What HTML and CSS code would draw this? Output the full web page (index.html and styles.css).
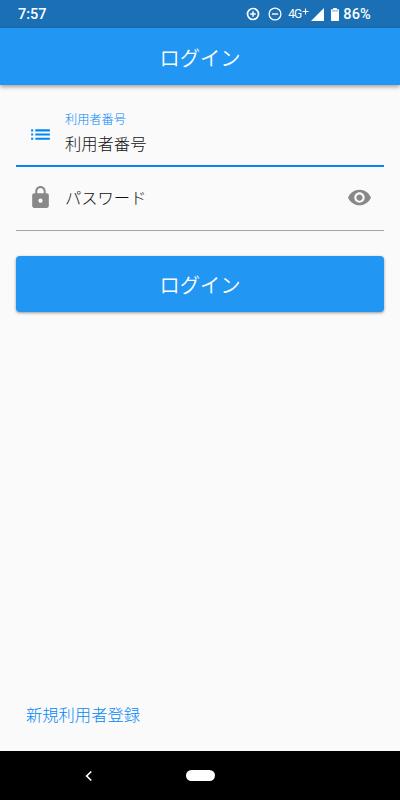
FILE: index.html
```html
<!DOCTYPE html>
<html lang="ja">
<head>
    <meta charset="UTF-8">
    <meta name="viewport" content="width=device-width, initial-scale=1.0">
    <title>ログイン</title>
    <link rel="stylesheet" href="styles.css">
</head>
<body>
    <div class="screen">
        <div class="status-bar">
            <span class="clock">7:57</span>
            <div class="status-icons">
                <svg class="data-saver" width="14" height="14" viewBox="0 0 14 14" fill="none" stroke="#fff">
                    <circle cx="7" cy="7" r="5.5" stroke-width="1.7"/>
                    <path d="M7 4.200v5.600M4.200 7h5.600" stroke-width="1.5"/>
                </svg>
                <svg class="dnd" width="14" height="14" viewBox="0 0 14 14" fill="none" stroke="#fff">
                    <circle cx="7" cy="7" r="5.9" stroke-width="1.3"/>
                    <path d="M3.900 7h6.200" stroke-width="1.4"/>
                </svg>
                <span class="network">4G</span>
                <svg class="plus" width="7" height="7" viewBox="0 0 7 7">
                    <path d="M3.500 .5v6M.5 3.500h6" stroke="#fff" stroke-width="1.100"/>
                </svg>
                <svg class="signal" width="13" height="13" viewBox="0 0 13 13">
                    <path d="M13 0v13H0z" fill="#fff"/>
                </svg>
                <svg class="battery" width="8" height="13" viewBox="0 0 8 13">
                    <path d="M2.200 0h3.600v1.300H7.300Q8 1.300 8 2v10.300q0 .7-.7.7H.7Q0 13 0 12.300V2Q0 1.300.7 1.300h1.500z" fill="#fff"/>
                    <path d="M1 2.900h6" stroke="#1a6fb5" stroke-opacity=".6"/>
                </svg>
                <span class="percent">86%</span>
            </div>
        </div>

        <header class="app-bar">
            <h1>ログイン</h1>
        </header>

        <main class="content">
            <div class="field field-active">
                <svg class="field-icon" width="25" height="25" viewBox="0 0 24 24" fill="currentColor">
                    <path d="M3 13h2v-2H3v2zm0 4h2v-2H3v2zm0-8h2V7H3v2zm4 4h14v-2H7v2zm0 4h14v-2H7v2zM7 7v2h14V7H7z"/>
                </svg>
                <div class="field-text">
                    <span class="field-label">利用者番号</span>
                    <span class="field-hint">利用者番号</span>
                </div>
            </div>

            <div class="field">
                <svg class="field-icon" width="25" height="25" viewBox="0 0 24 24" fill="currentColor">
                    <path d="M18 8h-1V6c0-2.760-2.240-5-5-5S7 3.240 7 6v2H6c-1.100 0-2 .9-2 2v10c0 1.100.9 2 2 2h12c1.100 0 2-.9 2-2V10c0-1.100-.9-2-2-2zm-6 9c-1.100 0-2-.9-2-2s.9-2 2-2 2 .9 2 2-.9 2-2 2zm3.100-9H8.900V6c0-1.710 1.390-3.100 3.100-3.100s3.100 1.390 3.100 3.100v2z"/>
                </svg>
                <div class="field-text">
                    <span class="field-placeholder">パスワード</span>
                </div>
                <svg class="toggle-icon" width="25" height="25" viewBox="0 0 24 24" fill="currentColor">
                    <path d="M12 4.500C7 4.500 2.730 7.610 1 12c1.730 4.390 6 7.500 11 7.500s9.270-3.110 11-7.500c-1.730-4.390-6-7.500-11-7.500zM12 17c-2.760 0-5-2.240-5-5s2.240-5 5-5 5 2.240 5 5-2.240 5-5 5zm0-8c-1.660 0-3 1.340-3 3s1.340 3 3 3 3-1.340 3-3-1.340-3-3-3z"/>
                </svg>
            </div>

            <button class="login-btn">ログイン</button>

            <a class="register-link" href="#">新規利用者登録</a>
        </main>

        <nav class="nav-bar">
            <svg class="nav-back" width="8" height="12" viewBox="0 0 8 12" fill="none" stroke="#fff" stroke-width="1.7">
                <path d="M6.300 1.500L1.700 6l4.600 4.500"/>
            </svg>
            <div class="nav-home"></div>
        </nav>
    </div>
</body>
</html>
```
FILE: styles.css
```css
* {
    margin: 0;
    padding: 0;
    box-sizing: border-box;
}

body {
    font-family: "Noto Sans CJK JP", sans-serif;
    background: #fafafa;
    color: #333;
}

.screen {
    display: flex;
    flex-direction: column;
    height: 800px;
}

.status-bar {
    display: flex;
    justify-content: space-between;
    align-items: center;
    height: 28px;
    padding: 0 29px 0 18px;
    background: #1a6fb5;
    color: white;
    font-family: Roboto, sans-serif;
    font-size: 14.5px;
    font-weight: 500;
}

.status-icons {
    display: flex;
    align-items: center;
}

.dnd {
    margin-left: 8px;
}

.network {
    width: 13px;
    margin-left: 6px;
    font-size: 12px;
    font-weight: 400;
    letter-spacing: -1px;
}

.plus {
    margin-left: 1px;
    margin-bottom: 5px;
}

.signal {
    margin-left: 2px;
}

.battery {
    margin-left: 7px;
}

.percent {
    margin-left: 4px;
    letter-spacing: 0.2px;
}

.app-bar {
    display: flex;
    align-items: center;
    justify-content: center;
    height: 57px;
    background: #2196f3;
    box-shadow: 0 2px 4px rgba(0,0,0,0.35);
    color: white;
}

.app-bar h1 {
    font-size: 20.3px;
    font-weight: 350;
    line-height: 30px;
}

.content {
    flex: 1;
    display: flex;
    flex-direction: column;
    padding: 16px 16px 25px;
}

.field {
    display: flex;
    align-items: center;
    height: 64px;
    padding: 0 12px 2px;
    border-bottom: 1px solid #a5a5a5;
    color: #888;
}

.field-active {
    height: 66px;
    padding: 2px 12px 0;
    border-bottom: 2px solid #0288f5;
    color: #0288f5;
}

.field-icon {
    margin-right: 12px;
}

.field-text {
    flex: 1;
    display: flex;
    flex-direction: column;
}

.field-active .field-text {
    padding-bottom: 3px;
}

.field-label {
    font-size: 12.2px;
    font-weight: 300;
    line-height: 18px;
    margin-bottom: 3px;
}

.field-hint,
.field-placeholder {
    font-size: 16.3px;
    font-weight: 300;
    line-height: 24px;
    color: #111;
}

.field-placeholder {
    padding-bottom: 2px;
}

.login-btn {
    height: 56px;
    margin-top: 25px;
    border: none;
    border-radius: 4px;
    background: #2196f3;
    box-shadow: 0 1px 3px rgba(0,0,0,0.4);
    color: white;
    font-family: inherit;
    font-size: 20.3px;
    font-weight: 350;
}

.register-link {
    align-self: flex-start;
    margin-top: auto;
    margin-left: 10px;
    color: #0288f5;
    font-size: 16.3px;
    font-weight: 300;
    line-height: 24px;
    text-decoration: none;
}

.nav-bar {
    display: flex;
    align-items: center;
    height: 49px;
    padding-left: 85px;
    background: black;
}

.nav-home {
    width: 29px;
    height: 11px;
    margin-left: 93px;
    border-radius: 6px;
    background: white;
}
```
